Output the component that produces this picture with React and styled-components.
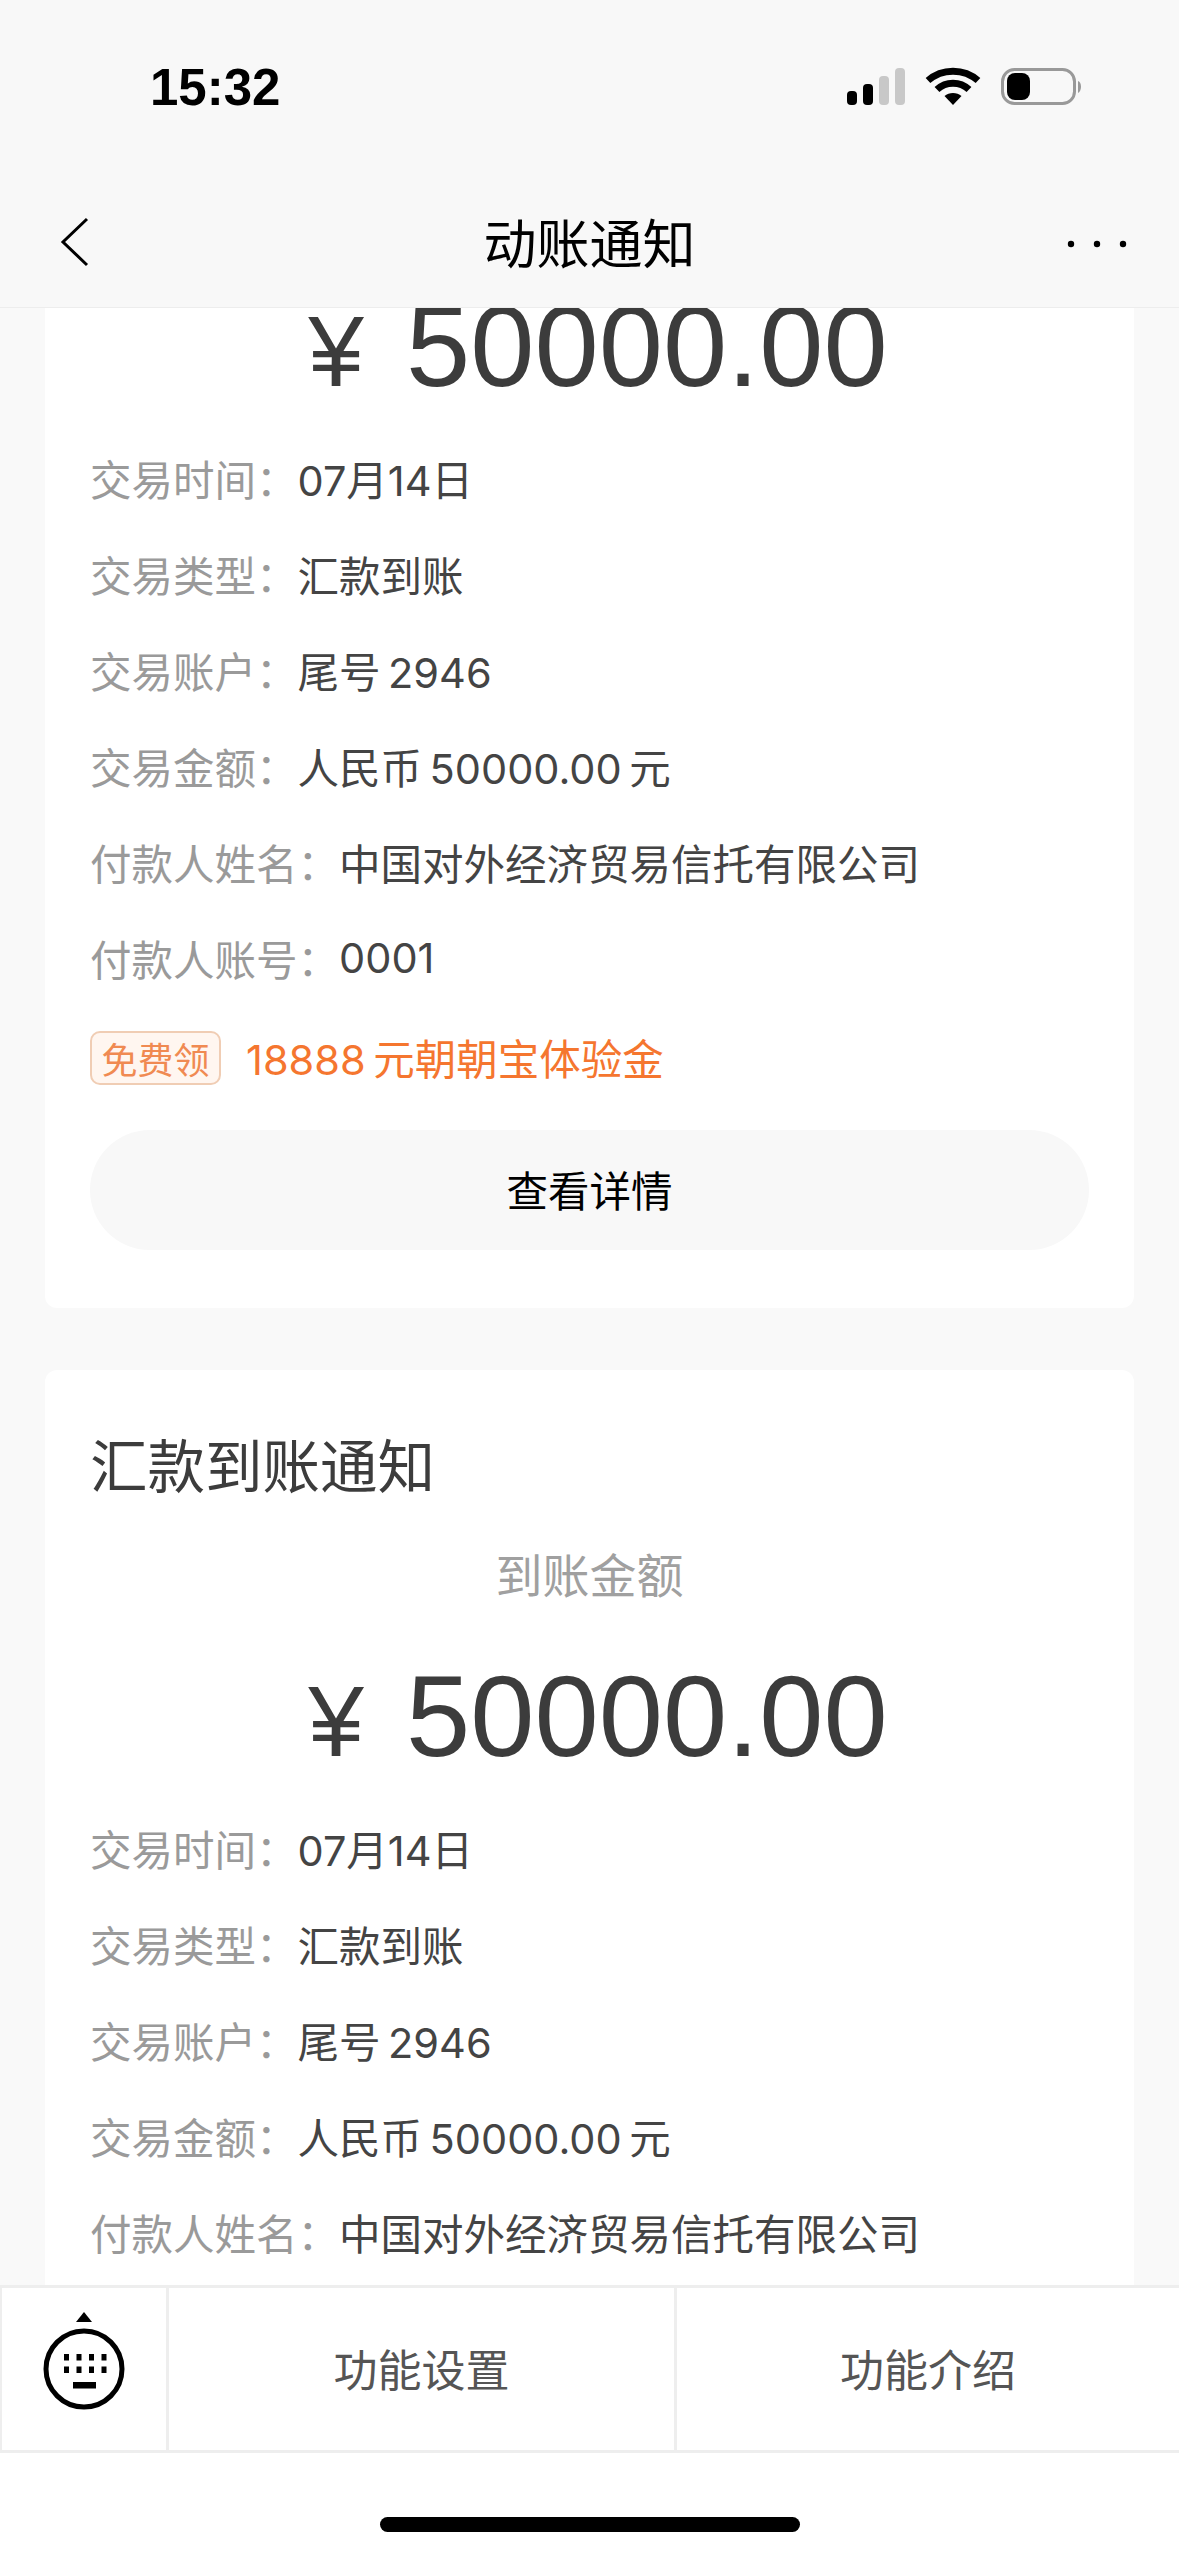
import React from "react";
import styled, { createGlobalStyle } from "styled-components";

const GlobalStyle = createGlobalStyle`
  html, body {
    margin: 0;
    padding: 0;
    background: #f9f9f9;
  }
  * {
    box-sizing: border-box;
  }
`;

const fontStack = `"Liberation Sans", "Noto Sans CJK SC", sans-serif`;
const rowFont = `Inter, "Noto Sans CJK SC", sans-serif`;

const details = [
  { label: "交易时间：", value: "07月14日" },
  { label: "交易类型：", value: "汇款到账" },
  { label: "交易账户：", value: "尾号\u20092946" },
  { label: "交易金额：", value: "人民币\u200950000.00\u2009元" },
  { label: "付款人姓名：", value: "中国对外经济贸易信托有限公司" },
  { label: "付款人账号：", value: "0001" },
];

export default function App() {
  return (
    <>
      <GlobalStyle />
      <Page>
        <Header>
          <StatusBar>
            <Time>15:32</Time>
            <StatusIcons />
          </StatusBar>
          <NavBar>
            <BackIcon />
            <NavTitle>动账通知</NavTitle>
            <MoreIcon />
          </NavBar>
        </Header>
        <ScrollArea>
          <CardList>
            <NoticeCard />
            <NoticeCard />
          </CardList>
        </ScrollArea>
        <BottomMenu>
          <KeyboardCell>
            <KeyboardIcon />
          </KeyboardCell>
          <MenuCell>功能设置</MenuCell>
          <MenuCell>功能介绍</MenuCell>
        </BottomMenu>
        <HomeArea>
          <HomeBar />
        </HomeArea>
      </Page>
    </>
  );
}

function NoticeCard() {
  return (
    <Card>
      <CardTitle>汇款到账通知</CardTitle>
      <AmountLabel>到账金额</AmountLabel>
      <Amount>
        <Yen>¥</Yen>
        50000.00
      </Amount>
      <Rows>
        {details.map((d) => (
          <Row key={d.label}>
            <RowLabel>{d.label}</RowLabel>
            <RowValue>{d.value}</RowValue>
          </Row>
        ))}
      </Rows>
      <Promo>
        <PromoTag>免费领</PromoTag>
        <PromoText>18888{"\u2009"}元朝朝宝体验金</PromoText>
      </Promo>
      <DetailButton>查看详情</DetailButton>
    </Card>
  );
}

function StatusIcons() {
  return (
    <StatusSvg viewBox="0 0 236 40" width="236" height="40">
      <rect x="0" y="24" width="10" height="14" rx="4" fill="#000" />
      <rect x="16" y="17" width="10" height="21" rx="4" fill="#000" />
      <rect x="32" y="9" width="10" height="29" rx="4" fill="#c8c8c8" />
      <rect x="48" y="1" width="10" height="37" rx="4" fill="#c8c8c8" />
      <path d="M81 13.5 C95 1 117 1 131 13.5" fill="none" stroke="#000" strokeWidth="7" />
      <path d="M90 22.5 C99 14 113 14 122 22.5" fill="none" stroke="#000" strokeWidth="7" />
      <path d="M97.5 29 C102 25 110 25 114.5 29 L106 38 Z" fill="#000" />
      <rect x="155.5" y="2.5" width="72" height="34" rx="12" fill="none" stroke="#999" strokeWidth="3" />
      <rect x="160" y="6" width="23" height="27" rx="8" fill="#000" />
      <path d="M231 14 C235 15 235 24 231 26 Z" fill="#999" />
    </StatusSvg>
  );
}

function BackIcon() {
  return (
    <BackSvg viewBox="0 0 30 50" width="30" height="50">
      <polyline points="27,2 3,25 27,48" fill="none" stroke="#000" strokeWidth="3" />
    </BackSvg>
  );
}

function MoreIcon() {
  return (
    <MoreSvg viewBox="0 0 60 10" width="60" height="10">
      <circle cx="4" cy="5" r="3.2" fill="#000" />
      <circle cx="30" cy="5" r="3.2" fill="#000" />
      <circle cx="56" cy="5" r="3.2" fill="#000" />
    </MoreSvg>
  );
}

function KeyboardIcon() {
  const keys = [];
  [0, 1].forEach((row) => {
    [0, 1, 2, 3].forEach((col) => {
      keys.push(<rect key={`${row}-${col}`} x={22 + col * 12.5} y={42 + row * 12.5} width="5" height="6.5" fill="#000" />);
    });
  });
  return (
    <svg viewBox="0 0 84 100" width="84" height="100">
      <polygon points="42,0 50,10 34,10" fill="#000" />
      <circle cx="42" cy="57" r="38" fill="none" stroke="#000" strokeWidth="5" />
      {keys}
      <rect x="31" y="70" width="23" height="6.5" fill="#000" />
    </svg>
  );
}

const Page = styled.div`
  width: 1179px;
  height: 2556px;
  display: flex;
  flex-direction: column;
  overflow: hidden;
  background: #f9f9f9;
  font-family: ${fontStack};
`;

const Header = styled.header`
  height: 308px;
  flex: none;
  padding-top: 60px;
  background: #f8f8f8;
  border-bottom: 1px solid #ededed;
  position: relative;
  z-index: 1;
`;

const StatusBar = styled.div`
  height: 54px;
  padding: 0 96px 0 150px;
  display: flex;
  align-items: center;
  justify-content: space-between;
`;

const Time = styled.span`
  font-size: 51px;
  font-weight: 700;
  color: #000;
`;

const StatusSvg = styled.svg`
  display: block;
`;

const NavBar = styled.div`
  height: 80px;
  margin-top: 90px;
  padding: 0 52px;
  display: grid;
  grid-template-columns: 1fr auto 1fr;
  align-items: center;
`;

const BackSvg = styled.svg`
  display: block;
  margin-left: 8px;
  margin-top: -4px;
`;

const MoreSvg = styled.svg`
  display: block;
  justify-self: end;
`;

const NavTitle = styled.h1`
  margin: -6px 0 0;
  font-size: 53px;
  font-weight: 400;
  color: #000;
`;

const ScrollArea = styled.main`
  flex: 1;
  min-height: 0;
  overflow: hidden;
  padding: 0 45px;
`;

const CardList = styled.div`
  margin-top: -308px;
  display: flex;
  flex-direction: column;
  gap: 62px;
`;

const Card = styled.section`
  height: 1308px;
  flex: none;
  padding: 68px 45px 58px;
  background: #fff;
  border-radius: 12px;
`;

const CardTitle = styled.h2`
  margin: 0;
  height: 60px;
  line-height: 60px;
  font-size: 57.5px;
  font-weight: 400;
  color: #3c3c3c;
`;

const AmountLabel = styled.div`
  margin-top: 49px;
  height: 60px;
  line-height: 60px;
  text-align: center;
  font-size: 47px;
  color: #a0a0a0;
`;

const Amount = styled.div`
  margin-top: 49px;
  height: 120px;
  line-height: 120px;
  padding-left: 17px;
  text-align: center;
  font-size: 115.5px;
  color: #3c3c3c;
`;

const Yen = styled.span`
  margin-right: 42px;
  font-size: 100px;
`;

const Rows = styled.div`
  margin-top: 24px;
  font-family: ${rowFont};
`;

const Row = styled.div`
  height: 96px;
  display: flex;
  align-items: center;
  font-size: 41.5px;
`;

const RowLabel = styled.span`
  color: #9a9a9a;
`;

const RowValue = styled.span`
  color: #444;
`;

const Promo = styled.div`
  margin-top: 25px;
  height: 54px;
  display: flex;
  align-items: center;
  gap: 25px;
`;

const PromoTag = styled.span`
  width: 131px;
  height: 54px;
  display: flex;
  align-items: center;
  justify-content: center;
  font-size: 36px;
  color: #f08a52;
  background: #fff6f0;
  border: 2px solid #f0cdb4;
  border-radius: 10px;
`;

const PromoText = styled.span`
  margin-top: -3px;
  font-family: ${rowFont};
  font-size: 41.5px;
  color: #f5762f;
`;

const DetailButton = styled.button`
  display: block;
  width: 100%;
  height: 120px;
  margin-top: 45px;
  padding-bottom: 4px;
  border: none;
  border-radius: 60px;
  background: #f8f8f8;
  font-family: inherit;
  font-size: 41.5px;
  color: #000;
`;

const BottomMenu = styled.nav`
  height: 168px;
  flex: none;
  display: grid;
  grid-template-columns: 169px 1fr 1fr;
  background: #fff;
  border-top: 3px solid #eee;
  border-bottom: 3px solid #eee;
  position: relative;
`;

const KeyboardCell = styled.div`
  display: flex;
  align-items: center;
  justify-content: center;
  padding-bottom: 14px;
  border-left: 2px solid #eee;
  border-right: 3px solid #eee;
`;

const MenuCell = styled.div`
  display: flex;
  align-items: center;
  justify-content: center;
  padding-bottom: 2px;
  font-size: 44px;
  color: #555;
  & + & {
    border-left: 3px solid #eee;
  }
`;

const HomeArea = styled.div`
  height: 103px;
  flex: none;
  background: #fff;
  display: flex;
  justify-content: center;
  padding-top: 64px;
`;

const HomeBar = styled.div`
  width: 420px;
  height: 15px;
  border-radius: 8px;
  background: #000;
`;
